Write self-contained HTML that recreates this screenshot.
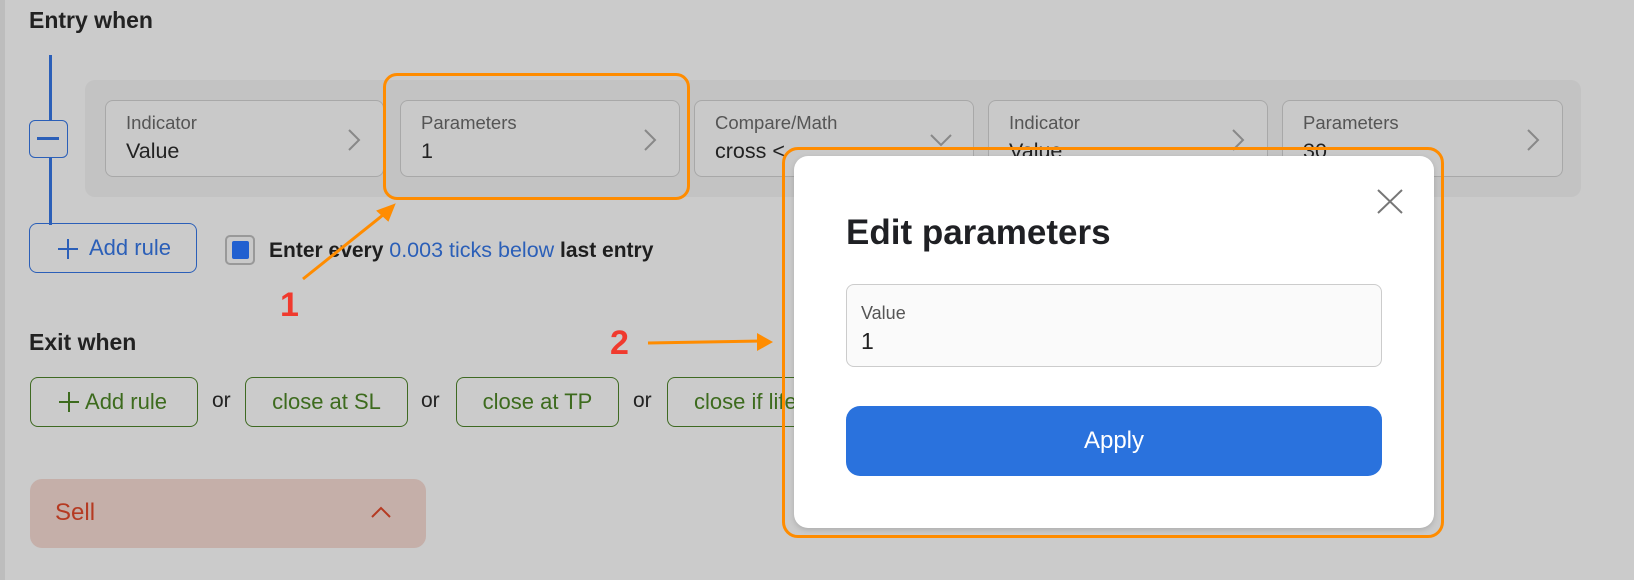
<!DOCTYPE html>
<html><head><meta charset="utf-8"><style>
*{box-sizing:border-box;margin:0;padding:0}
body{width:1634px;height:580px;background:#cbcbcb;font-family:"Liberation Sans",sans-serif;position:relative;overflow:hidden;color:#1e1e1e}
.a{position:absolute}
.card{position:absolute;top:100px;height:77px;border:1px solid #a8a8a8;border-radius:8px;background:#c9c9c9}
.card .l{position:absolute;left:20px;top:11px;font-size:18.5px;color:#555}
.card .v{position:absolute;left:20px;top:38px;font-size:21.5px;color:#222}
.card svg{position:absolute;right:22px;top:27px}
.gb{position:absolute;top:377px;height:50px;border:1px solid #3f6a22;border-radius:8px;color:#3d6b1e;font-size:22px;text-align:center;line-height:48px}
.or{position:absolute;top:389px;font-size:21px;color:#222}
</style></head><body>
<div class="a" style="left:0;top:0;width:5px;height:580px;background:#bdbdbd"></div>
<div class="a" style="left:29px;top:7px;font-size:23px;font-weight:bold;color:#222">Entry when</div>
<div class="a" style="left:49px;top:55px;width:3px;height:170px;background:#2b5fb8"></div>
<div class="a" style="left:29px;top:120px;width:39px;height:38px;border:1.5px solid #2b5fb8;border-radius:6px;background:#c9c9c9"><div class="a" style="left:7px;top:16px;width:22px;height:3px;background:#2b5fb8"></div></div>
<div class="a" style="left:85px;top:80px;width:1496px;height:117px;background:#c3c3c3;border-radius:10px"></div>
<div class="card" style="left:105px;width:279px"><div class="l">Indicator</div><div class="v">Value</div><svg width="14" height="24"><path d="M2 2L12 12L2 22" fill="none" stroke="#888" stroke-width="2"/></svg></div>
<div class="card" style="left:400px;width:280px"><div class="l">Parameters</div><div class="v">1</div><svg width="14" height="24"><path d="M2 2L12 12L2 22" fill="none" stroke="#888" stroke-width="2"/></svg></div>
<div class="card" style="left:694px;width:280px"><div class="l">Compare/Math</div><div class="v">cross &lt;</div><svg width="24" height="14" style="right:20px;top:32px"><path d="M2 2L12 12L22 2" fill="none" stroke="#888" stroke-width="2"/></svg></div>
<div class="card" style="left:988px;width:280px"><div class="l">Indicator</div><div class="v">Value</div><svg width="14" height="24"><path d="M2 2L12 12L2 22" fill="none" stroke="#888" stroke-width="2"/></svg></div>
<div class="card" style="left:1282px;width:281px"><div class="l">Parameters</div><div class="v">30</div><svg width="14" height="24"><path d="M2 2L12 12L2 22" fill="none" stroke="#888" stroke-width="2"/></svg></div>
<div class="a" style="left:383px;top:73px;width:307px;height:127px;border:3px solid #ff8c00;border-radius:14px"></div>
<div class="a" style="left:29px;top:223px;width:168px;height:50px;border:1.5px solid #2b5fb8;border-radius:8px;color:#2b5fb8;font-size:22px;line-height:47px;padding-left:59px">Add rule</div>
<svg class="a" style="left:57px;top:238px" width="22" height="22"><path d="M11 1V21M1 11H21" stroke="#2b5fb8" stroke-width="2"/></svg>
<div class="a" style="left:225px;top:235px;width:30px;height:30px;border:2px solid #999;border-radius:5px;background:#c9c9c9"><div class="a" style="left:5px;top:4px;width:17px;height:18px;background:#2160d0;border-radius:2px"></div></div>
<div class="a" style="left:269px;top:238px;font-size:21px;font-weight:bold;color:#1e1e1e">Enter every <span style="color:#2b5fb8;font-weight:normal;font-size:21.5px">0.003 ticks below</span> last entry</div>
<svg class="a" style="left:0;top:0" width="1634" height="580"><path d="M303 279L388 211" stroke="#ff8c00" stroke-width="3"/><path d="M394 205L378 211L388 220Z" fill="#ff8c00" stroke="#ff8c00" stroke-width="2"/><path d="M648 343L762 341" stroke="#ff8c00" stroke-width="3"/><path d="M773 342L757 333L757 351Z" fill="#ff8c00"/></svg>
<div class="a" style="left:280px;top:286px;font-size:34px;font-weight:bold;color:#f03a2e">1</div>
<div class="a" style="left:610px;top:324px;font-size:34px;font-weight:bold;color:#f03a2e">2</div>
<div class="a" style="left:29px;top:329px;font-size:23px;font-weight:bold;color:#222">Exit when</div>
<div class="gb" style="left:30px;width:168px;padding-left:24px">Add rule</div>
<svg class="a" style="left:58px;top:391px" width="22" height="22"><path d="M11 1V21M1 11H21" stroke="#3d6b1e" stroke-width="2"/></svg>
<div class="or" style="left:212px">or</div>
<div class="gb" style="left:245px;width:163px">close at SL</div>
<div class="or" style="left:421px">or</div>
<div class="gb" style="left:456px;width:163px">close at TP</div>
<div class="or" style="left:633px">or</div>
<div class="gb" style="left:667px;width:180px;text-align:left;padding-left:26px">close if life</div>
<div class="a" style="left:30px;top:479px;width:396px;height:69px;background:#c5afa9;border-radius:12px"><div class="a" style="left:25px;top:20px;font-size:24px;color:#b53a22">Sell</div><svg class="a" style="left:340px;top:26px" width="22" height="14"><path d="M2 12L11 3L20 12" fill="none" stroke="#b53a22" stroke-width="2"/></svg></div>
<div class="a" style="left:782px;top:147px;width:662px;height:391px;border:3px solid #ff8c00;border-radius:16px"></div>
<div class="a" style="left:794px;top:156px;width:640px;height:372px;background:#fff;border-radius:14px;box-shadow:0 2px 6px rgba(0,0,0,.15)"></div>
<svg class="a" style="left:1377px;top:189px" width="26" height="25"><path d="M1 1L25 24M25 1L1 24" stroke="#777" stroke-width="2"/></svg>
<div class="a" style="left:846px;top:213px;font-size:35px;font-weight:bold;color:#1f2024">Edit parameters</div>
<div class="a" style="left:846px;top:284px;width:536px;height:83px;border:1px solid #ccc;border-radius:8px;background:#fafafa"><div class="a" style="left:14px;top:18px;font-size:18px;color:#555">Value</div><div class="a" style="left:14px;top:43px;font-size:23px;color:#222">1</div></div>
<div class="a" style="left:846px;top:406px;width:536px;height:70px;background:#2a72dd;border-radius:14px;color:#fff;font-size:24px;text-align:center;line-height:70px">Apply</div>
</body></html>
